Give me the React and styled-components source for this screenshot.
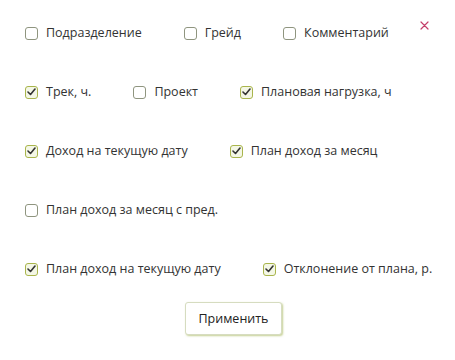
import React, { useState } from "react";
import styled, { createGlobalStyle } from "styled-components";

const Global = createGlobalStyle`
  html, body { margin: 0; padding: 0; background: #fff; }
  body { font-family: "Open Sans", "Noto Sans", sans-serif; color: #333; }
`;

const Panel = styled.div`
  position: relative;
  width: 455px;
  height: 360px;
  box-sizing: border-box;
  padding: 23px 13px 0 25px;
  display: flex;
  flex-direction: column;
  gap: 39px;
`;

const Row = styled.div`
  display: flex;
  align-items: center;
  height: 20px;
  column-gap: 42px;
`;

const Item = styled.label`
  display: inline-flex;
  align-items: center;
  gap: 8px;
  font-size: 12.5px;
  line-height: 20px;
  color: #333;
  white-space: nowrap;
  cursor: pointer;
`;

const Box = styled.span`
  width: 13px;
  height: 13px;
  box-sizing: border-box;
  border-radius: 3px;
  border: 1.5px solid ${(p) => (p.$on ? "#a9b54c" : "#8f957f")};
  background: ${(p) => (p.$on ? "#f4f7e6" : "#fff")};
  display: flex;
  align-items: center;
  justify-content: center;
  flex: none;
`;

const Close = styled.button`
  position: absolute;
  top: 19px;
  right: 25px;
  width: 12px;
  height: 12px;
  padding: 0;
  border: 0;
  background: transparent;
  cursor: pointer;
  display: flex;
  align-items: center;
  justify-content: center;
`;

const Footer = styled.div`
  display: flex;
  justify-content: center;
  margin-top: -16px;
`;

const Apply = styled.button`
  width: 97px;
  height: 33px;
  background: #fff;
  border: 1px solid #d6dcc0;
  border-radius: 3px;
  box-shadow: 1px 1px 2px rgba(150, 170, 60, 0.55);
  font-family: "Open Sans", sans-serif;
  font-size: 12.5px;
  color: #222;
  cursor: pointer;
`;

function Check({ label, initial }) {
  const [on, setOn] = useState(initial);
  return (
    <Item onClick={() => setOn(!on)}>
      <Box $on={on}>
        {on && (
          <svg width="9" height="8" viewBox="0 0 9 8">
            <path d="M1 4 L3.5 6.5 L8 1" fill="none" stroke="#333" strokeWidth="1.6" strokeLinecap="round" strokeLinejoin="round" />
          </svg>
        )}
      </Box>
      {label}
    </Item>
  );
}

const rows = [
  [["Подразделение", false], ["Грейд", false], ["Комментарий", false]],
  [["Трек, ч.", true], ["Проект", false], ["Плановая нагрузка, ч", true]],
  [["Доход на текущую дату", true], ["План доход за месяц", true]],
  [["План доход за месяц с пред.", false]],
  [["План доход на текущую дату", true], ["Отклонение от плана, р.", true]],
];

export default function App() {
  return (
    <>
      <Global />
      <Panel>
        <Close aria-label="close">
          <svg width="9" height="9" viewBox="0 0 9 9">
            <path d="M1 1 L8 8 M8 1 L1 8" stroke="#c4406a" strokeWidth="1.2" strokeLinecap="round" />
          </svg>
        </Close>
        {rows.map((r, i) => (
          <Row key={i}>
            {r.map(([l, on]) => (
              <Check key={l} label={l} initial={on} />
            ))}
          </Row>
        ))}
        <Footer>
          <Apply>Применить</Apply>
        </Footer>
      </Panel>
    </>
  );
}
